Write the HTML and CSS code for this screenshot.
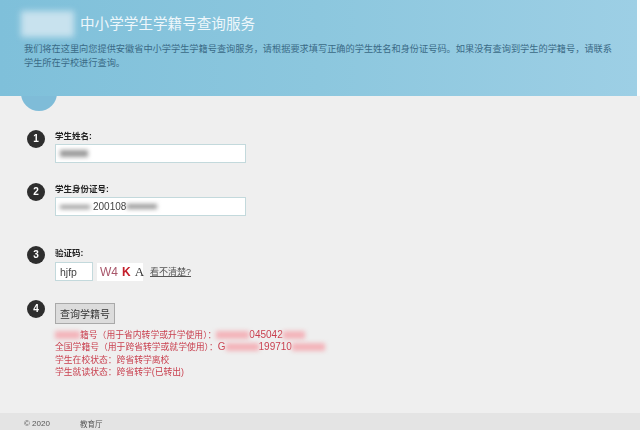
FILE: index.html
```html
<!DOCTYPE html>
<html lang="zh-CN">
<head>
  <meta charset="UTF-8">
  <title>中小学学生学籍号查询服务</title>
  <link rel="stylesheet" href="styles.css">
</head>
<body>
  <div class="header">
    <div class="title-row">
      <div class="logo"></div>
      <h1>中小学学生学籍号查询服务</h1>
    </div>
    <p class="intro">我们将在这里向您提供安徽省中小学学生学籍号查询服务，请根据要求填写正确的学生姓名和身份证号码。如果没有查询到学生的学籍号，请联系学生所在学校进行查询。</p>
    <div class="tab"></div>
  </div>

  <div class="steps">
    <div class="step step-name">
      <div class="num">1</div>
      <div class="body">
        <label>学生姓名:</label>
        <div class="field"><span class="smudge smudge-name"></span></div>
      </div>
    </div>

    <div class="step step-id">
      <div class="num">2</div>
      <div class="body">
        <label>学生身份证号:</label>
        <div class="field"><span class="smudge smudge-id1"></span>200108<span class="smudge smudge-id2"></span></div>
      </div>
    </div>

    <div class="step step-code">
      <div class="num">3</div>
      <div class="body">
        <label>验证码:</label>
        <div class="code-row">
          <div class="field field-code">hjfp</div>
          <div class="captcha"><span class="c1">W4</span><span class="c2">K</span><span class="c3">A</span></div>
          <a class="refresh" href="#">看不清楚?</a>
        </div>
      </div>
    </div>

    <div class="step step-submit">
      <div class="num">4</div>
      <div class="body">
        <button type="button">查询学籍号</button>
        <div class="result">
          <div><span class="smudge-red red-a"></span>籍号（用于省内转学或升学使用）：<span class="smudge-red red-b"></span><span class="digits">045042</span><span class="smudge-red red-c"></span></div>
          <div>全国学籍号（用于跨省转学或就学使用）：<span class="digits">G</span><span class="smudge-red red-d"></span><span class="digits">199710</span><span class="smudge-red red-e"></span></div>
          <div>学生在校状态：跨省转学离校</div>
          <div>学生就读状态：跨省转学(已转出)</div>
        </div>
      </div>
    </div>
  </div>

  <div class="footer">
    <span class="copy">© 2020</span>
    <span class="org">教育厅</span>
  </div>
</body>
</html>
```

FILE: styles.css
```css
* {
  box-sizing: border-box;
}
html, body {
  margin: 0;
  height: 430px;
  overflow: hidden;
}
body {
  display: flex;
  flex-direction: column;
  background: linear-gradient(to bottom, #fafcfd 96px, #efefef 96px);
  font-family: "Liberation Sans", "Noto Sans CJK SC", sans-serif;
  color: #333;
  filter: blur(0.3px);
}
.header {
  position: relative;
  width: 637px;
  height: 96px;
  padding: 12px 24px 0;
  background: linear-gradient(to right, #7fc0da, #8cc7de 50%, #9dcfe5);
}
.title-row {
  display: flex;
  align-items: center;
  gap: 3px;
  height: 24px;
}
.logo {
  width: 53px;
  height: 26px;
  margin-left: -3px;
  margin-right: 3px;
  background: #c8e2ee;
  filter: blur(3px);
}
h1 {
  margin: 0;
  font-size: 14.6px;
  font-weight: 400;
  color: #eef7fb;
  line-height: 24px;
}
.intro {
  margin: 7px 0 0;
  font-size: 9.2px;
  line-height: 13.5px;
  color: #3a6a86;
}
.tab {
  position: absolute;
  left: 21px;
  top: 75px;
  width: 36px;
  height: 36px;
  border-radius: 50%;
  background: #7fbcd8;
  clip-path: inset(21px 0 0 0);
}
.steps {
  flex: 1;
  padding-left: 27px;
}
.step {
  display: flex;
  gap: 10px;
}
.step-name {
  margin-top: 33px;
}
.step-id {
  margin-top: 19px;
}
.step-code {
  margin-top: 30px;
}
.step-submit {
  margin-top: 18px;
}
.num {
  flex: none;
  width: 18px;
  height: 18px;
  margin-top: 1px;
  border-radius: 50%;
  background: #2e2e2e;
  color: #fff;
  font-size: 10px;
  font-weight: 700;
  line-height: 18px;
  text-align: center;
}
.step-code .num {
  margin-top: 0;
}
label {
  display: block;
  height: 15px;
  font-size: 8.5px;
  font-weight: 700;
  line-height: 14px;
  color: #222;
}
.field {
  display: flex;
  align-items: center;
  width: 191px;
  height: 19px;
  padding-left: 4px;
  background: #fff;
  border: 1px solid #c3d9dc;
  font-size: 10px;
  color: #444;
}
.smudge {
  display: block;
  height: 6px;
  background: #9a9a9a;
  filter: blur(2px);
}
.smudge-name {
  width: 28px;
  height: 7px;
}
.smudge-id1 {
  width: 30px;
  height: 4px;
  margin-right: 3px;
}
.smudge-id2 {
  width: 30px;
  height: 5px;
  margin-left: 1px;
}
.code-row {
  display: flex;
  align-items: center;
  margin-top: 1px;
}
.field-code {
  width: 38px;
  padding-left: 4px;
  font-size: 10.5px;
}
.captcha {
  display: flex;
  align-items: center;
  gap: 4px;
  width: 46px;
  height: 18px;
  margin-left: 4px;
  padding-left: 3px;
  background: #fff;
  font-size: 13px;
}
.c1 {
  color: #a8566a;
  font-size: 12px;
}
.c2 {
  color: #c4202c;
  font-weight: 700;
  font-size: 12px;
}
.c3 {
  color: #333;
  font-family: "Liberation Serif", serif;
}
.refresh {
  margin-left: 7px;
  font-size: 9px;
  color: #555;
}
button {
  display: block;
  width: 60px;
  height: 21px;
  margin-top: 4px;
  padding: 0;
  background: #dcdcdc;
  border: 1px solid #a9a9a9;
  font-family: inherit;
  font-size: 10px;
  color: #333;
}
.result {
  margin-top: 5px;
  font-size: 8.8px;
  line-height: 12.3px;
  color: #c9404f;
  white-space: nowrap;
}
.result div {
  display: flex;
  align-items: center;
}
.digits {
  font-size: 10px;
}
.smudge-red {
  display: block;
  height: 8px;
  background: #f3b4ba;
  filter: blur(2px);
}
.red-a {
  width: 25px;
}
.red-b {
  width: 33px;
}
.red-c {
  width: 22px;
}
.red-d {
  width: 33px;
}
.red-e {
  width: 33px;
}
.footer {
  display: flex;
  align-items: center;
  height: 17px;
  padding: 4px 0 0 24px;
  background: #e4e4e4;
  font-size: 8px;
  color: #555;
}
.org {
  margin-left: 30px;
  font-size: 7.5px;
}
```
